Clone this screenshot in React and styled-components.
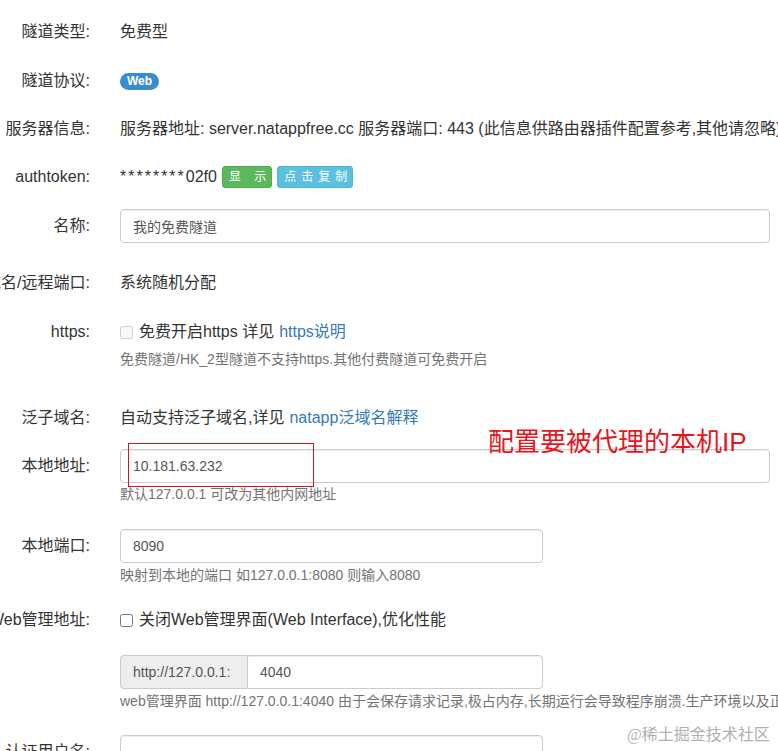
import React from "react";
import styled, { createGlobalStyle } from "styled-components";

const GlobalStyle = createGlobalStyle`
  html, body { margin: 0; padding: 0; background: #fff; }
  body {
    font-family: "Liberation Sans", "Noto Sans CJK SC", sans-serif;
    color: #333;
    font-size: 16px;
    overflow: hidden;
  }
  * { box-sizing: border-box; }
`;

const Page = styled.div`
  position: relative;
  width: 778px;
  height: 751px;
  overflow: hidden;
  padding-top: 15px;
`;

const Group = styled.div`
  display: flex;
  gap: 30px;
  margin-bottom: ${(p) => p.$mb ?? 14}px;
`;

const Label = styled.label`
  flex: 0 0 90px;
  width: 90px;
  min-width: 0;
  display: flex;
  justify-content: flex-end;
  white-space: nowrap;
  padding-top: 7px;
  line-height: 20px;
  font-size: 16px;
  color: #333;
`;

const Control = styled.div`
  position: relative;
  flex: 1;
  min-width: 0;
  padding-right: 8px;
`;

const Static = styled.div`
  display: flex;
  align-items: center;
  height: 34px;
  line-height: 20px;
  white-space: nowrap;
`;

const Stars = styled.span`
  letter-spacing: 2px;
`;

const Input = styled.input`
  display: block;
  width: ${(p) => p.$width || "100%"};
  height: 34px;
  padding: 6px 12px;
  font-family: inherit;
  font-size: 14px;
  color: #555;
  border: 1px solid #ccc;
  border-radius: 4px;
  box-shadow: inset 0 1px 1px rgba(0, 0, 0, 0.075);
  outline: none;
`;

const Help = styled.div`
  margin-top: ${(p) => p.$mt ?? 2}px;
  font-size: 14px;
  line-height: 18px;
  color: #737373;
  white-space: nowrap;
`;

const Badge = styled.span`
  display: inline-block;
  padding: 0 7px;
  height: 17px;
  line-height: 17px;
  border-radius: 9px;
  background: #3a8ccf;
  color: #fff;
  font-size: 12px;
  font-weight: bold;
`;

const Btn = styled.button`
  height: 22px;
  margin-left: ${(p) => p.$ml ?? 5}px;
  padding: 0 0 0 6px;
  border: 1px solid ${(p) => (p.$variant === "info" ? "#46b8da" : "#4cae4c")};
  background: ${(p) => (p.$variant === "info" ? "#5bc0de" : "#5cb85c")};
  color: #fff;
  border-radius: 3px;
  font-family: inherit;
  font-size: 12px;
  letter-spacing: 5px;
  line-height: 20px;
  white-space: pre;
`;

const Check = styled.input`
  width: 13px;
  height: 13px;
  margin: 0 6px 0 0;
  flex: 0 0 auto;
`;

const Link = styled.a`
  color: #337ab7;
  text-decoration: none;
  margin-left: 5px;
`;

const InputGroup = styled.div`
  display: flex;
  width: 423px;
  height: 34px;
`;

const Addon = styled.span`
  flex: 0 0 127px;
  display: flex;
  align-items: center;
  padding: 0 12px;
  font-size: 14px;
  color: #555;
  background: #eee;
  border: 1px solid #ccc;
  border-right: 0;
  border-radius: 4px 0 0 4px;
  white-space: nowrap;
`;

const GroupInput = styled(Input)`
  flex: 1;
  border-radius: 0 4px 4px 0;
`;

const RedBox = styled.div`
  position: absolute;
  left: 8px;
  top: -6px;
  width: 186px;
  height: 44px;
  border: 1px solid #cc1a1a;
  pointer-events: none;
`;

const RedNote = styled.div`
  position: absolute;
  left: 368px;
  top: -23px;
  font-size: 26px;
  line-height: 32px;
  color: #e8141c;
  white-space: nowrap;
`;

const Watermark = styled.div`
  position: absolute;
  left: 627px;
  top: 724px;
  font-family: "Liberation Serif", "Noto Sans CJK SC", serif;
  font-size: 16px;
  line-height: 22px;
  color: #b0b0b0;
  white-space: nowrap;
`;

export default function App() {
  return (
    <>
      <GlobalStyle />
      <Page>
        <Group $mb={15}>
          <Label>隧道类型:</Label>
          <Control><Static>免费型</Static></Control>
        </Group>
        <Group>
          <Label>隧道协议:</Label>
          <Control><Static><Badge>Web</Badge></Static></Control>
        </Group>
        <Group>
          <Label>服务器信息:</Label>
          <Control>
            <Static>服务器地址: server.natappfree.cc 服务器端口: 443 (此信息供路由器插件配置参考,其他请忽略)</Static>
          </Control>
        </Group>
        <Group $mb={15}>
          <Label>authtoken:</Label>
          <Control>
            <Static>
              <Stars>********</Stars>02f0
              <Btn $variant="success">显 示</Btn>
              <Btn $variant="info">点击复制</Btn>
            </Static>
          </Control>
        </Group>
        <Group $mb={23}>
          <Label>名称:</Label>
          <Control><Input defaultValue="我的免费隧道" /></Control>
        </Group>
        <Group $mb={15}>
          <Label>域名/远程端口:</Label>
          <Control><Static>系统随机分配</Static></Control>
        </Group>
        <Group $mb={33}>
          <Label>https:</Label>
          <Control>
            <Static>
              <Check type="checkbox" disabled />
              免费开启https 详见<Link href="#">https说明</Link>
            </Static>
            <Help $mt={1}>免费隧道/HK_2型隧道不支持https.其他付费隧道可免费开启</Help>
          </Control>
        </Group>
        <Group>
          <Label>泛子域名:</Label>
          <Control>
            <Static>自动支持泛子域名,详见<Link href="#">natapp泛域名解释</Link></Static>
          </Control>
        </Group>
        <Group $mb={26}>
          <Label>本地地址:</Label>
          <Control>
            <Input defaultValue="10.181.63.232" />
            <Help $mt={2}>默认127.0.0.1 可改为其他内网地址</Help>
            <RedBox />
            <RedNote>配置要被代理的本机IP</RedNote>
          </Control>
        </Group>
        <Group $mb={19}>
          <Label>本地端口:</Label>
          <Control>
            <Input $width="423px" defaultValue="8090" />
            <Help $mt={3}>映射到本地的端口 如127.0.0.1:8080 则输入8080</Help>
          </Control>
        </Group>
        <Group $mb={18}>
          <Label>Web管理地址:</Label>
          <Control>
            <Static>
              <Check type="checkbox" />
              关闭Web管理界面(Web Interface),优化性能
            </Static>
          </Control>
        </Group>
        <Group $mb={25}>
          <Label />
          <Control>
            <InputGroup>
              <Addon>http://127.0.0.1:</Addon>
              <GroupInput defaultValue="4040" />
            </InputGroup>
            <Help $mt={3}>web管理界面 http://127.0.0.1:4040 由于会保存请求记录,极占内存,长期运行会导致程序崩溃.生产环境以及正式使用时请关闭</Help>
          </Control>
        </Group>
        <Group>
          <Label>认证用户名:</Label>
          <Control><Input $width="423px" /></Control>
        </Group>
        <Watermark>@稀土掘金技术社区</Watermark>
      </Page>
    </>
  );
}
